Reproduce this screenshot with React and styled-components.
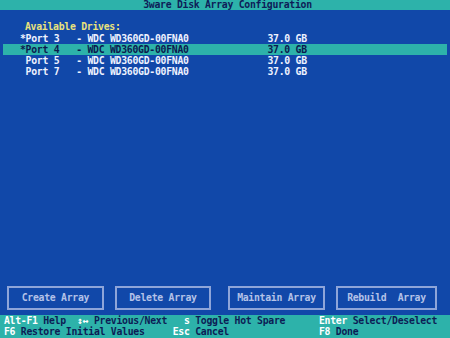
import React from 'react';
import styled, {createGlobalStyle} from 'styled-components';

// text-mode grid: 30 rows, ~5.6px wide cells
const ROW = 11.27;

const GlobalStyle = createGlobalStyle`
  html, body {
    margin: 0;
    padding: 0;
    background: #1148a9;
  }
  body {
    width: 450px;
    height: 338px;
    overflow: hidden;
  }
`;

const Screen = styled.div`
  width: 450px;
  height: 338px;
  overflow: hidden;
  background: #1148a9;
  font-family: "DejaVu Sans Mono", "Liberation Mono", monospace;
  font-weight: bold;
  font-size: 9.8px;
  letter-spacing: -0.275px;
  line-height: ${ROW}px;
  white-space: pre;
`;

const Grid = styled.div`
  margin-top: -0.7px;
  height: ${ROW * 30 + 2}px;
  display: flex;
  flex-direction: column;
`;

const TitleBar = styled.div`
  height: ${ROW}px;
  margin-top: -0.5px;
  padding-left: 5px;
  background: #2db2aa;
  color: #0d1c58;
  text-align: center;
`;

const Main = styled.div`
  flex: 1;
  padding-top: ${ROW}px;
`;

const Heading = styled.div`
  height: ${ROW}px;
  padding-left: 25px;
  color: #e9e27c;
`;

const DriveRow = styled.div`
  height: ${ROW}px;
  margin: 0 3px;
  padding-left: 17px;
  background: ${p => (p.$active ? '#2db2aa' : 'transparent')};
  color: ${p => (p.$active ? '#0b1a4e' : '#eef2ff')};
`;

const ButtonBar = styled.div`
  height: ${ROW * 3}px;
  display: flex;
  align-items: center;
  padding-left: 7px;
`;

const ActionButton = styled.div`
  box-sizing: border-box;
  width: ${p => p.$w}px;
  height: ${ROW * 2 + 1.5}px;
  margin-left: ${p => p.$gap || 0}px;
  border: 2px solid #8ea5d9;
  color: #b4c2e8;
  display: flex;
  align-items: center;
  justify-content: center;
`;

const Footer = styled.div`
  height: ${ROW * 2 + 2}px;
  padding-left: 4px;
  background: #2db2aa;
`;

const FooterLine = styled.div`
  height: ${ROW}px;
`;

const Key = styled.span`
  color: #ffffff;
`;

const Desc = styled.span`
  color: #0c1d55;
`;

const drives = [
  {port: 3, picked: true},
  {port: 4, picked: true, active: true},
  {port: 5},
  {port: 7},
];

const buttons = [
  {label: 'Create Array', w: 97},
  {label: 'Delete Array', w: 96, gap: 11},
  {label: 'Maintain Array', w: 97, gap: 17},
  {label: 'Rebuild  Array', w: 101, gap: 11},
];

const helpLines = [
  [['Alt-F1', 1], [' Help  '], ['↕↔', 1], [' Previous/Next   '], ['s', 1], [' Toggle Hot Spare      '], ['Enter', 1], [' Select/Deselect']],
  [['F6', 1], [' Restore Initial Values     '], ['Esc', 1], [' Cancel                '], ['F8', 1], [' Done']],
];

export default function App() {
  return (
    <>
      <GlobalStyle/>
      <Screen>
        <Grid>
          <TitleBar>3ware Disk Array Configuration</TitleBar>
          <Main>
            <Heading>Available Drives:</Heading>
            {drives.map(d => (
              <DriveRow key={d.port} $active={d.active}>
                {`${d.picked ? '*' : ' '}Port ${d.port}   - WDC WD360GD-00FNA0              37.0 GB`}
              </DriveRow>
            ))}
          </Main>
          <ButtonBar>
            {buttons.map(b => (
              <ActionButton key={b.label} $w={b.w} $gap={b.gap}>{b.label}</ActionButton>
            ))}
          </ButtonBar>
          <Footer>
            {helpLines.map((line, i) => (
              <FooterLine key={i}>
                {line.map(([text, isKey], j) =>
                  isKey ? <Key key={j}>{text}</Key> : <Desc key={j}>{text}</Desc>
                )}
              </FooterLine>
            ))}
          </Footer>
        </Grid>
      </Screen>
    </>
  );
}
